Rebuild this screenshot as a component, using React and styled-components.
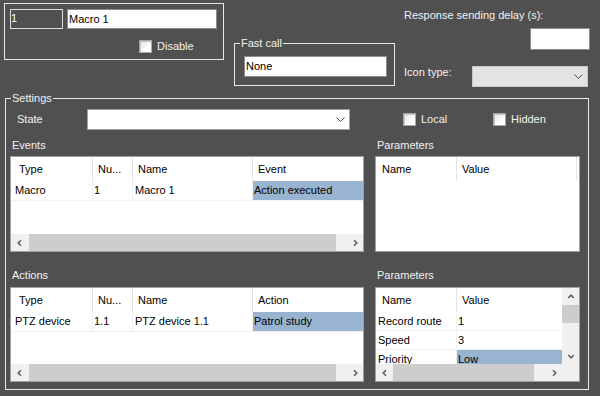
import React from "react";
import styled, { createGlobalStyle } from "styled-components";

const GlobalStyle = createGlobalStyle`
  html, body {
    margin: 0;
    padding: 0;
    background: #505050;
  }
  body {
    font-family: "Liberation Sans", Arial, sans-serif;
    font-size: 11px;
  }
  * {
    box-sizing: border-box;
  }
`;

const Window = styled.div`
  width: 600px;
  height: 396px;
  background: #505050;
  color: #f2f2f2;
  padding: 3px 0 0 4px;
  display: flex;
  flex-direction: column;
  overflow: hidden;
  line-height: 13px;
`;

const TopRow = styled.div`
  display: flex;
  align-items: flex-start;
  height: 95px;
  flex: none;
`;

const MacroBox = styled.div`
  width: 220px;
  height: 57px;
  border: 1px solid #e8e8e8;
  padding: 5px 0 0 5px;
`;

const FieldRow = styled.div`
  display: flex;
  gap: 4px;
`;

const NumberField = styled.div`
  width: 53px;
  height: 20px;
  border: 1px solid #dcdcdc;
  color: #ffffff;
  padding: 2px 0 0 0;
`;

const TextField = styled.div`
  width: ${(p) => p.$w}px;
  height: ${(p) => p.$h}px;
  background: #ffffff;
  border: 1px solid #8c8c8c;
  color: #000;
  padding: 0 0 0 1px;
  display: flex;
  align-items: center;
`;

const CheckItem = styled.div`
  display: flex;
  align-items: center;
  gap: 5px;
  height: 13px;
  width: ${(p) => (p.$w ? `${p.$w}px` : "auto")};
  margin-left: ${(p) => p.$ml || 0}px;
  margin-top: ${(p) => p.$mt || 0}px;
`;

const CheckBox = styled.span`
  width: 13px;
  height: 13px;
  flex: none;
  border: 1px solid #a8a8a8;
  background: linear-gradient(135deg, #e2e2e2, #ffffff 70%);
  box-shadow: inset 1px 1px 0 #c4c4c4;
`;

const Group = styled.div`
  position: relative;
  border: 1px solid #e8e8e8;
`;

const GroupCaption = styled.span`
  position: absolute;
  top: -7px;
  left: 5px;
  padding: 0 1px;
  background: #505050;
  line-height: 13px;
  white-space: nowrap;
`;

const FastBox = styled(Group)`
  margin: 40px 0 0 10px;
  width: 161px;
  height: 43px;
  padding: 12px 0 0 9px;
`;

const RightCol = styled.div`
  margin-left: 9px;
  width: 186px;
  padding-top: 6px;
  display: flex;
  flex-direction: column;
`;

const DelayField = styled(TextField)`
  align-self: flex-end;
  margin-top: 6px;
`;

const IconRow = styled.div`
  display: flex;
  align-items: flex-start;
  margin-top: 16px;
`;

const IconLabel = styled.span`
  width: 68px;
  padding-top: 0;
`;

const Combo = styled.div`
  width: ${(p) => p.$w}px;
  height: 21px;
  border: 1px solid ${(p) => (p.$disabled ? "#c8c8c8" : "#a0a0a0")};
  background: ${(p) => (p.$disabled ? "#e3e3e3" : "#ffffff")};
  display: flex;
  align-items: center;
  justify-content: flex-end;
  padding-right: 4px;
`;

const Settings = styled(Group)`
  margin-left: 1px;
  width: 584px;
  height: 292px;
  padding: 10px 7px 0 4px;
  flex: none;
`;

const StateRow = styled.div`
  display: flex;
  align-items: center;
  height: 21px;
`;

const StateLabel = styled.span`
  width: 77px;
  padding-left: 7px;
`;

const Panes = styled.div`
  display: flex;
  gap: 11px;
  margin-top: 9px;
`;

const Column = styled.div`
  width: ${(p) => p.$w}px;
  display: flex;
  flex-direction: column;
`;

const SectionLabel = styled.div`
  height: 13px;
  padding-left: 2px;
  margin-top: ${(p) => p.$mt || 0}px;
  margin-bottom: ${(p) => p.$mb}px;
`;

const ListView = styled.div`
  height: ${(p) => p.$h}px;
  border: 1px solid #a0a0a0;
  background: #ffffff;
  color: #000;
  display: flex;
  flex-direction: column;
  overflow: hidden;
`;

const ScrollFrame = styled(ListView)`
  display: grid;
  grid-template-columns: 1fr 17px;
  grid-template-rows: 1fr 17px;
`;

const ListContent = styled.div`
  overflow: hidden;
  display: flex;
  flex-direction: column;
`;

const HeaderRow = styled.div`
  display: grid;
  grid-template-columns: ${(p) => p.$cols};
  height: 24px;
  flex: none;
`;

const HeaderCell = styled.div`
  padding: 6px 0 0 ${(p) => p.$pad}px;
  border-right: 1px solid #e5e5e5;
  white-space: nowrap;
  overflow: hidden;
  &:last-child {
    border-right: none;
  }
`;

const DataRow = styled.div`
  display: grid;
  grid-template-columns: ${(p) => p.$cols};
  height: ${(p) => p.$h}px;
  border-bottom: 1px solid #f0f0f0;
  flex: none;
`;

const DataCell = styled.div`
  padding: 3px 0 0 ${(p) => p.$pad}px;
  border-right: 1px solid #f0f0f0;
  background: ${(p) => (p.$selected ? "#99b4d1" : "transparent")};
  white-space: nowrap;
  overflow: hidden;
  &:last-child {
    border-right: none;
  }
`;

const Spacer = styled.div`
  flex: 1;
`;

const HScroll = styled.div`
  display: flex;
  height: 17px;
  background: #f0f0f0;
  flex: none;
`;

const VScroll = styled.div`
  display: flex;
  flex-direction: column;
  width: 17px;
  background: #f0f0f0;
`;

const ArrowBtn = styled.div`
  width: 17px;
  height: 17px;
  flex: none;
  display: flex;
  align-items: center;
  justify-content: center;
`;

const Track = styled.div`
  flex: 1;
  display: flex;
  flex-direction: ${(p) => (p.$vertical ? "column" : "row")};
  padding-${(p) => (p.$vertical ? "top" : "left")}: ${(p) => p.$offset}px;
`;

const Thumb = styled.div`
  flex: none;
  background: #cdcdcd;
  ${(p) => (p.$vertical ? `height: ${p.$size}px;` : `width: ${p.$size}px;`)}
`;

const Corner = styled.div`
  background: #f0f0f0;
`;

const arrowPaths = {
  left: "M5 1.2 L2.2 4 L5 6.8",
  right: "M3 1.2 L5.8 4 L3 6.8",
  up: "M1.2 5 L4 2.2 L6.8 5",
  down: "M1.2 3 L4 5.8 L6.8 3",
};

function Arrow({ dir }) {
  return (
    <svg width="8" height="8" viewBox="0 0 8 8">
      <path d={arrowPaths[dir]} fill="none" stroke="#606060" strokeWidth="1.6" />
    </svg>
  );
}

function ComboChevron() {
  return (
    <svg width="9" height="5" viewBox="0 0 9 5">
      <path d="M0.5 0.5 L4.5 4.5 L8.5 0.5" fill="none" stroke="#505050" strokeWidth="1" />
    </svg>
  );
}

function HorizontalBar({ offset, size }) {
  return (
    <HScroll>
      <ArrowBtn>
        <Arrow dir="left" />
      </ArrowBtn>
      <Track $offset={offset}>
        <Thumb $size={size} />
      </Track>
      <ArrowBtn>
        <Arrow dir="right" />
      </ArrowBtn>
    </HScroll>
  );
}

const tableCols = "82px 40px 120px 1fr";
const paramCols = "81px 120px 1fr";

function ItemTable({ last, rows, height }) {
  return (
    <ListView $h={height}>
      <HeaderRow $cols={tableCols}>
        <HeaderCell $pad={8}>Type</HeaderCell>
        <HeaderCell $pad={5}>Nu...</HeaderCell>
        <HeaderCell $pad={5}>Name</HeaderCell>
        <HeaderCell $pad={5}>{last}</HeaderCell>
      </HeaderRow>
      {rows.map((r) => (
        <DataRow key={r.name} $cols={tableCols} $h={20}>
          <DataCell $pad={4}>{r.type}</DataCell>
          <DataCell $pad={1}>{r.num}</DataCell>
          <DataCell $pad={2}>{r.name}</DataCell>
          <DataCell $pad={1} $selected>
            {r.value}
          </DataCell>
        </DataRow>
      ))}
      <Spacer />
      <HorizontalBar offset={1} size={307} />
    </ListView>
  );
}

function ParamHeader() {
  return (
    <HeaderRow $cols={paramCols}>
      <HeaderCell $pad={6}>Name</HeaderCell>
      <HeaderCell $pad={5}>Value</HeaderCell>
      <HeaderCell $pad={0} />
    </HeaderRow>
  );
}

const actionParams = [
  { name: "Record route", value: "1" },
  { name: "Speed", value: "3" },
  { name: "Priority", value: "Low", selected: true },
];

export default function App() {
  return (
    <>
      <GlobalStyle />
      <Window>
        <TopRow>
          <MacroBox>
            <FieldRow>
              <NumberField>1</NumberField>
              <TextField $w={150} $h={20}>
                Macro 1
              </TextField>
            </FieldRow>
            <CheckItem $ml={129} $mt={11}>
              <CheckBox />
              Disable
            </CheckItem>
          </MacroBox>
          <FastBox>
            <GroupCaption>Fast call</GroupCaption>
            <TextField $w={143} $h={21}>
              None
            </TextField>
          </FastBox>
          <RightCol>
            <span>Response sending delay (s):</span>
            <DelayField $w={60} $h={22} />
            <IconRow>
              <IconLabel>Icon type:</IconLabel>
              <Combo $w={116} $disabled>
                <ComboChevron />
              </Combo>
            </IconRow>
          </RightCol>
        </TopRow>

        <Settings>
          <GroupCaption>Settings</GroupCaption>
          <StateRow>
            <StateLabel>State</StateLabel>
            <Combo $w={263}>
              <ComboChevron />
            </Combo>
            <CheckItem $ml={53} $w={90}>
              <CheckBox />
              Local
            </CheckItem>
            <CheckItem>
              <CheckBox />
              Hidden
            </CheckItem>
          </StateRow>

          <Panes>
            <Column $w={354}>
              <SectionLabel $mb={4}>Events</SectionLabel>
              <ItemTable
                height={96}
                last="Event"
                rows={[{ type: "Macro", num: "1", name: "Macro 1", value: "Action executed" }]}
              />
              <SectionLabel $mt={17} $mb={5}>
                Actions
              </SectionLabel>
              <ItemTable
                height={95}
                last="Action"
                rows={[{ type: "PTZ device", num: "1.1", name: "PTZ device 1.1", value: "Patrol study" }]}
              />
            </Column>

            <Column $w={205}>
              <SectionLabel $mb={4}>Parameters</SectionLabel>
              <ListView $h={96}>
                <ParamHeader />
              </ListView>
              <SectionLabel $mt={17} $mb={5}>
                Parameters
              </SectionLabel>
              <ScrollFrame $h={95}>
                <ListContent>
                  <ParamHeader />
                  {actionParams.map((p) => (
                    <DataRow key={p.name} $cols={paramCols} $h={19}>
                      <DataCell $pad={2}>{p.name}</DataCell>
                      <DataCell $pad={1} $selected={p.selected}>
                        {p.value}
                      </DataCell>
                      <DataCell $pad={0} />
                    </DataRow>
                  ))}
                </ListContent>
                <VScroll>
                  <ArrowBtn>
                    <Arrow dir="up" />
                  </ArrowBtn>
                  <Track $vertical $offset={0}>
                    <Thumb $vertical $size={18} />
                  </Track>
                  <ArrowBtn>
                    <Arrow dir="down" />
                  </ArrowBtn>
                </VScroll>
                <HorizontalBar offset={0} size={141} />
                <Corner />
              </ScrollFrame>
            </Column>
          </Panes>
        </Settings>
      </Window>
    </>
  );
}
